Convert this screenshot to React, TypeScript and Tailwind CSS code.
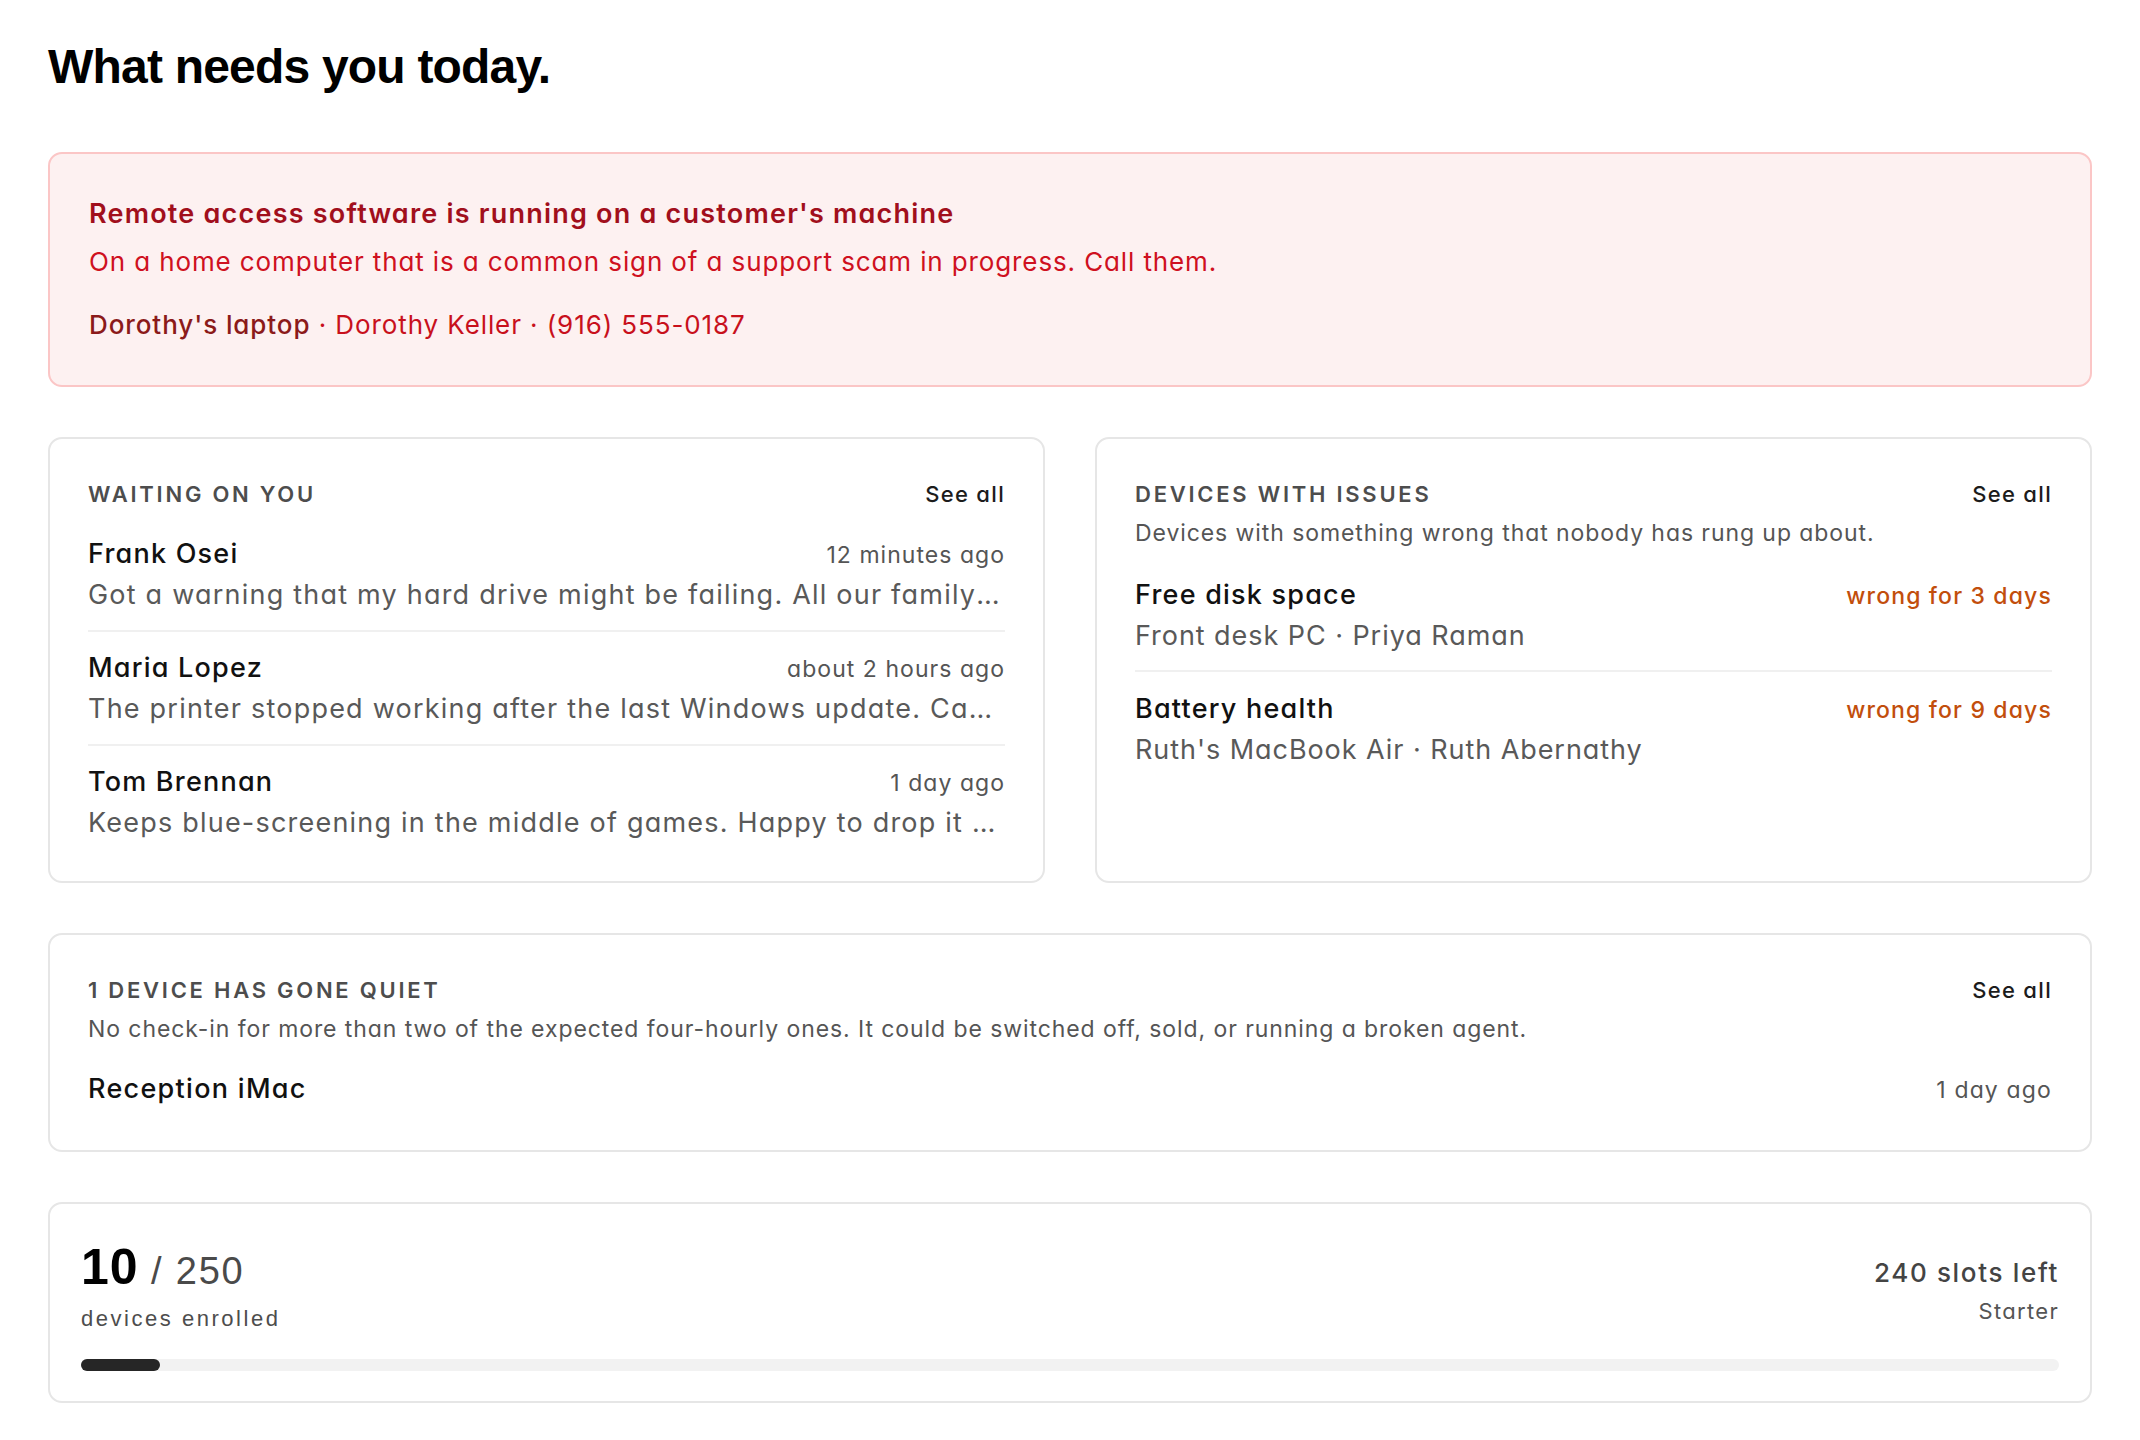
import React from "react";

const body = "font-['Inter','Noto_Sans',sans-serif] [font-feature-settings:'cv11']";

function SeeAll() {
  return (
    <span className="text-[22px] leading-[30px] font-medium text-[#1c1c1c] tracking-[0.06em]">See all</span>
  );
}

function Heading({ children }: { children: React.ReactNode }) {
  return (
    <div className="text-[22px] leading-[30px] font-semibold uppercase tracking-[0.125em] text-[#4d4d4d]">
      {children}
    </div>
  );
}

const waiting = [
  {
    name: "Frank Osei",
    time: "12 minutes ago",
    msg: "Got a warning that my hard drive might be failing. All our family photos are on it and I don't have a backup.",
  },
  {
    name: "Maria Lopez",
    time: "about 2 hours ago",
    msg: "The printer stopped working after the last Windows update. Can you take a look when you get a chance?",
  },
  {
    name: "Tom Brennan",
    time: "1 day ago",
    msg: "Keeps blue-screening in the middle of games. Happy to drop it off at the shop if that's easier.",
  },
];

const issues = [
  { title: "Free disk space", sub: "Front desk PC · Priya Raman", age: "wrong for 3 days" },
  { title: "Battery health", sub: "Ruth's MacBook Air · Ruth Abernathy", age: "wrong for 9 days" },
];

export default function App() {
  return (
    <div className={`min-h-screen bg-white px-12 pt-[39px] pb-10 ${body}`}>
      <h1 className="font-['Liberation_Sans',Arial,sans-serif] text-[48px] leading-[56px] font-bold tracking-[-0.8px] text-black">
        What needs you today.
      </h1>

      <div className="mt-[57px] flex flex-col gap-[50px]">
        {/* Alert */}
        <div className="rounded-[14px] border-2 border-[#fbc6c6] bg-[#fdf1f1] px-[39px] pt-[42px] pb-[42px]">
          <div className="text-[27px] leading-[36px] font-semibold text-[#a10f1c] tracking-[0.045em]">
            Remote access software is running on a customer's machine
          </div>
          <div className="mt-[12px] text-[26px] leading-[36px] text-[#cf1020] tracking-[0.034em]">
            On a home computer that is a common sign of a support scam in progress. Call them.
          </div>
          <div className="mt-[27px] text-[26px] leading-[36px] text-[#c8101c] tracking-[0.035em]">
            <span className="font-medium text-[#8b1a1a]">Dorothy's laptop</span> · Dorothy Keller · (916) 555-0187
          </div>
        </div>

        {/* Two cards */}
        <div className="grid grid-cols-2 gap-[50px]">
          <div className="rounded-[14px] border-2 border-[#e6e6e6] bg-white px-[38px] pt-[40px] pb-[39px]">
            <div className="flex items-center justify-between">
              <Heading>Waiting on you</Heading>
              <SeeAll />
            </div>
            <div className="mt-[9px] flex flex-col">
              {waiting.map((w, i) => (
                <div
                  key={w.name}
                  className={`pt-[16px] ${i < waiting.length - 1 ? "pb-[16px] border-b-2 border-[#f0f0f0]" : ""}`}
                >
                  <div className="flex items-baseline justify-between gap-6">
                    <span className="text-[27px] leading-[40px] font-medium text-[#111111] tracking-[0.045em]">{w.name}</span>
                    <span className="text-[23px] leading-[40px] text-[#555555] tracking-[0.045em] whitespace-nowrap">{w.time}</span>
                  </div>
                  <div className="truncate text-[27px] leading-[39px] text-[#595959] tracking-[0.045em]">{w.msg}</div>
                </div>
              ))}
            </div>
          </div>

          <div className="rounded-[14px] border-2 border-[#e6e6e6] bg-white px-[38px] pt-[40px] pb-[36px]">
            <div className="flex items-center justify-between">
              <Heading>Devices with issues</Heading>
              <SeeAll />
            </div>
            <div className="mt-[9px] text-[23px] leading-[30px] text-[#555555] tracking-[0.04em]">
              Devices with something wrong that nobody has rung up about.
            </div>
            <div className="mt-[10px] flex flex-col">
              {issues.map((d, i) => (
                <div
                  key={d.title}
                  className={`pt-[17px] ${i < issues.length - 1 ? "pb-[15px] border-b-2 border-[#f0f0f0]" : ""}`}
                >
                  <div className="flex items-baseline justify-between gap-6">
                    <span className="text-[27px] leading-[40px] font-medium text-[#111111] tracking-[0.045em]">{d.title}</span>
                    <span className="text-[23px] leading-[40px] font-medium text-[#c24e0c] tracking-[0.05em] whitespace-nowrap">{d.age}</span>
                  </div>
                  <div className="text-[27px] leading-[39px] text-[#595959] tracking-[0.035em]">{d.sub}</div>
                </div>
              ))}
            </div>
          </div>
        </div>

        {/* Quiet */}
        <div className="rounded-[14px] border-2 border-[#e6e6e6] bg-white px-[38px] pt-[40px] pb-[40px]">
          <div className="flex items-center justify-between">
            <Heading>1 device has gone quiet</Heading>
            <SeeAll />
          </div>
          <div className="mt-[9px] text-[23px] leading-[30px] text-[#555555] tracking-[0.04em]">
            No check-in for more than two of the expected four-hourly ones. It could be switched off, sold, or running a broken agent.
          </div>
          <div className="mt-[25px] flex items-baseline justify-between">
            <span className="text-[27px] leading-[40px] font-medium text-[#111111] tracking-[0.048em]">Reception iMac</span>
            <span className="text-[23px] leading-[40px] text-[#555555] tracking-[0.05em]">1 day ago</span>
          </div>
        </div>

        {/* Enrolled */}
        <div className="rounded-[14px] border-2 border-[#e6e6e6] bg-white px-[31px] pt-[38px] pb-[30px]">
          <div className="flex items-start justify-between">
            <div>
              <div className="flex items-baseline font-['Liberation_Sans',Arial,sans-serif]">
                <span className="text-[50px] leading-none font-bold text-black tracking-[1px]">10</span>
                <span className="text-[38px] leading-none text-[#4a4a4a] tracking-[1.8px] whitespace-pre"> / 250</span>
              </div>
              <div className="mt-[12px] font-['Liberation_Sans',Arial,sans-serif] text-[22px] leading-[30px] tracking-[0.115em] text-[#4d4d4d]">
                devices enrolled
              </div>
            </div>
            <div className="mt-[13px] flex flex-col items-end">
              <div className="text-[26px] leading-[36px] font-medium text-[#444444] tracking-[0.064em]">240 slots left</div>
              <div className="mt-[5px] text-[22px] leading-[30px] text-[#555555] tracking-[0.06em]">Starter</div>
            </div>
          </div>
          <div className="mt-[25px] h-3 w-full rounded-full bg-[#f2f2f2]">
            <div className="h-3 rounded-full bg-[#262626]" style={{ width: `${(10 / 250) * 100}%` }} />
          </div>
        </div>
      </div>
    </div>
  );
}
